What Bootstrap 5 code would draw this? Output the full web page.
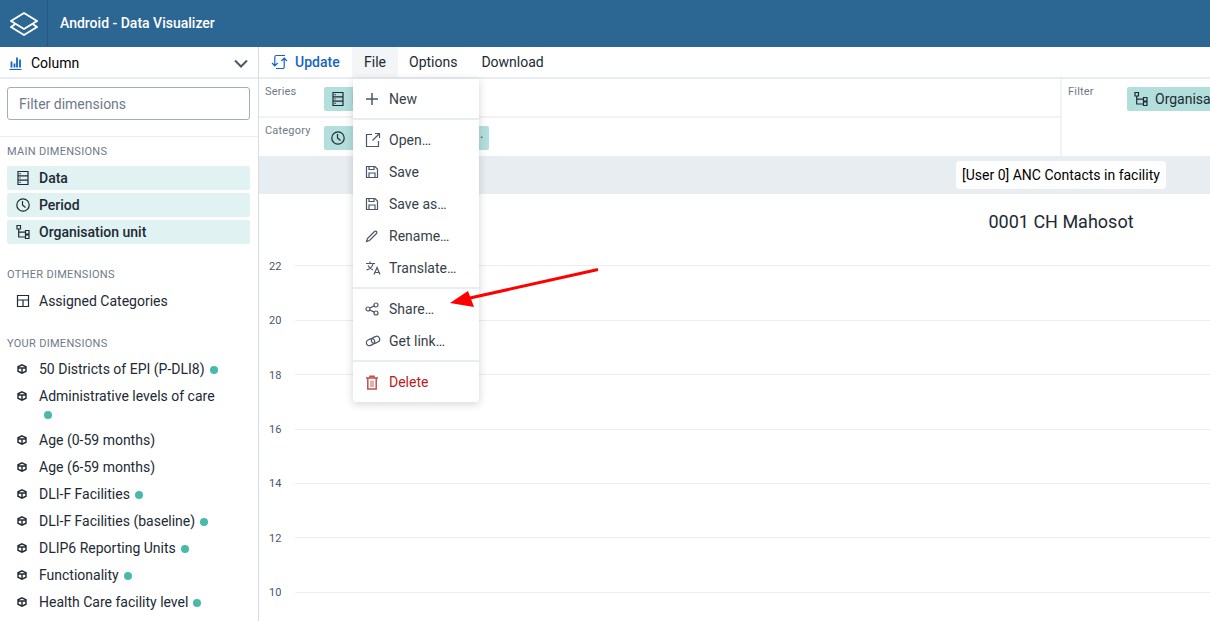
<!DOCTYPE html>
<html lang="en">
  <head>
    <meta charset="UTF-8" />
    <meta name="viewport" content="width=device-width, initial-scale=1.0" />
    <title>Android - Data Visualizer</title>
    <link href="https://cdn.jsdelivr.net/npm/bootstrap@5.3.2/dist/css/bootstrap.min.css" rel="stylesheet" />
    <style>
      html, body { height: 100%; overflow: hidden; }
      body { font-family: Roboto, "Liberation Sans", sans-serif; font-size: 14px; color: #212934; background: #fff; }
      svg.ico { fill: none; stroke: currentColor; stroke-width: 1.2; flex: none; display: block; }
      svg.ico.thick { stroke-width: 2; }
      svg.ico.mid { stroke-width: 1.5; }

      .app-head { height: 47px; background: #2c6693; color: #fff; }
      .app-logo { width: 48px; height: 47px; border-right: 1px solid #27597f; }
      .app-name { font-weight: 500; padding-left: 12px; }

      .app-body { height: 574px; }
      .side { width: 259px; flex: none; border-right: 1px solid #d5dde5; overflow: hidden; }
      .type-pick { height: 32px; padding: 2px 10px 0 9px; border-bottom: 2px solid #e8edf2; font-size: 14px; color: #000; }
      .type-pick svg.bars { color: #1565c0; margin-right: 9px; }
      .type-pick svg.chev { color: #4a5768; }
      .filter-wrap { height: 58px; padding: 8px 8px 0 7px; border-bottom: 1px solid #e8edf2; }
      .filter-box { height: 33px; width: 243px; border: 1px solid #a0adba; border-radius: 3px; font-size: 14px; padding: 0 11px; color: #212934; box-shadow: none; }
      .filter-box::placeholder { color: #6e7a8a; }
      .sec-title { font-size: 11px; line-height: 14px; color: #6e7a8a; padding-left: 7px; letter-spacing: .3px; text-transform: uppercase; margin-bottom: 7px; }
      .sec-main { margin-top: 8px; }
      .sec-other { margin-top: 24px; }
      .sec-your { margin-top: 24px; margin-bottom: 6px; }
      .dim-row { width: 243px; margin-left: 7px; min-height: 24px; padding-left: 9px; display: flex; line-height: 24px; border-radius: 2px; }
      .dim-row .ic-cell { width: 23px; flex: none; height: 24px; display: flex; align-items: center; }
      .dim-on { background: #e0f2f1; font-weight: 500; margin-bottom: 3px; }
      .dim-sm { margin-bottom: 3px; line-height: 24px; padding-right: 30px; }
      .dim-sm .ic-cell { padding-left: 1px; }
      .live-dot { display: inline-block; width: 8px; height: 8px; border-radius: 50%; background: #48b9ab; margin-left: 5px; vertical-align: 0; }
      .wrap-line { height: 17px; line-height: 12px; }

      .work { flex: 1 1 auto; min-width: 0; overflow: hidden; }
      .work-in { width: 1604px; }
      .tool-bar { height: 32px; border-bottom: 2px solid #e8edf2; }
      .tool-btn { height: 30px; padding: 0 13px 0 11px; display: flex; align-items: center; color: #212934; }
      .tool-update { width: 93px; padding: 0 0 0 12px; color: #1565c0; font-weight: 500; }
      .tool-update svg { margin-right: 7px; }
      .tool-file { width: 46px; padding: 0; background: #f3f5f7; }

      .lay-wrap { height: 77px; background: #fff; }
      .lay-left { width: 803px; border-right: 2px solid #f0f2f5; }
      .lay-row { height: 39px; display: flex; padding: 0 0 0 6px; }
      .lay-row:first-child { border-bottom: 2px solid #f0f2f5; }
      .lay-lbl { width: 59px; flex: none; font-size: 11px; color: #6e7a8a; padding-top: 6px; line-height: 14px; letter-spacing: .2px; }
      .chip { height: 24px; margin-top: 8px; background: #b2dfdb; border-radius: 2px; display: flex; align-items: center; padding: 0 6px 0 7px; }
      .chip svg { margin-right: 7px; }
      .chip-cat { width: 165px; justify-content: space-between; }
      .chip-more { font-size: 8px; color: #4a5768; }
      .lay-right { padding: 0 0 0 6px; display: flex; }

      .title-bar { height: 38px; background: #e8edf2; display: flex; justify-content: center; align-items: center; }
      .title-chip { background: #fff; border-radius: 4px; height: 28px; padding: 0 6px; line-height: 28px; color: #000; }
      .chart-title { height: 56px; padding-top: 17px; text-align: center; font-size: 18px; line-height: 22px; color: #212934; }
      .chart-rows { padding-top: 15.4px; }
      .grid-row { height: 54.4px; display: flex; align-items: flex-start; }
      .grid-row span { width: 36px; flex: none; font-size: 11px; color: #4a5768; padding-left: 10px; line-height: 14px; margin-top: -5.6px; }
      .grid-row i { flex: 1 1 auto; border-top: 1px solid #ebedf0; display: block; }

      .file-menu { position: absolute; left: 353px; top: 79px; width: 126px; height: 323px; background: #fff; border-radius: 2px; padding-top: 4px;
        box-shadow: 0 2px 8px rgba(33,41,52,.2); z-index: 5; }
      .menu-row { height: 32px; display: flex; align-items: center; padding-left: 12px; color: #373f4a; }
      .menu-row .mi { width: 24px; flex: none; color: #4a5768; }
      .menu-line { height: 2px; background: #e8edf2; margin: 3px 0 4px; }
      .menu-del { color: #b71c1c; }
      .menu-del .mi { color: #c0504d; }
      .red-arrow { position: absolute; left: 440px; top: 260px; z-index: 6; }
      .icon-defs { position: absolute; }
    </style>
  </head>
  <body>
    <header class="app-head d-flex align-items-center">
      <div class="app-logo d-flex align-items-center justify-content-center">
        <svg width="28" height="24" viewBox="0 0 28 24" fill="none" stroke="#fff" stroke-width="2" stroke-linejoin="round" class="d-block">
          <path d="M14 1 L27 9 L14 17 L1 9 Z" />
          <path d="M5 12.200 L1 15 L14 23 L27 15 L23 12.200" />
        </svg>
      </div>
      <div class="app-name">Android - Data Visualizer</div>
    </header>

    <div class="app-body d-flex">
      <aside class="side">
        <div class="type-pick d-flex align-items-center">
          <svg class="ico bars" width="13" height="13" viewBox="0 0 13 13"><path d="M.5 12.500h12" /><path d="M2.500 10.500v-6M5.500 10.500v-4M8 10.500V.5M11 10.500v-8" stroke-width="1.800" /></svg>
          <span class="flex-grow-1">Column</span>
          <svg class="ico thick chev" width="14" height="9" viewBox="0 0 14 9"><path d="M1 1.500l6 6 6-6" /></svg>
        </div>
        <div class="filter-wrap">
          <input class="form-control filter-box" placeholder="Filter dimensions" />
        </div>

        <div class="sec-title sec-main">Main dimensions</div>
        <div class="dim-row dim-on"><div class="ic-cell"><svg class="ico" width="14" height="14" viewBox="0 0 14 14"><use href="#i-data" /></svg></div>Data</div>
        <div class="dim-row dim-on"><div class="ic-cell"><svg class="ico" width="14" height="14" viewBox="0 0 14 14"><use href="#i-clock" /></svg></div>Period</div>
        <div class="dim-row dim-on"><div class="ic-cell"><svg class="ico" width="14" height="14" viewBox="0 0 14 14"><use href="#i-org" /></svg></div>Organisation unit</div>

        <div class="sec-title sec-other">Other dimensions</div>
        <div class="dim-row"><div class="ic-cell"><svg class="ico" width="14" height="14" viewBox="0 0 14 14"><path d="M1.500 1.500h11v11h-11zM1.500 6h11M7 6v6.500" /></svg></div>Assigned Categories</div>

        <div class="sec-title sec-your">Your dimensions</div>
        <div id="dim-list"></div>
      </aside>

      <main class="work">
        <div class="work-in">
          <div class="tool-bar d-flex">
            <div class="tool-btn tool-update">
              <svg class="ico" width="17" height="16" viewBox="0 0 17 16"><path d="M1 9l2.800 2.800L6.600 9M3.800 11.800V3a1.500 1.500 0 0 1 1.500-1.500H14M16 7l-2.800-2.800L10.400 7M13.200 4.200V13a1.500 1.500 0 0 1-1.500 1.500H5" /></svg>
              Update
            </div>
            <div class="tool-btn tool-file justify-content-center">File</div>
            <div class="tool-btn">Options</div>
            <div class="tool-btn">Download</div>
          </div>

          <div class="lay-wrap d-flex">
            <div class="lay-left">
              <div class="lay-row">
                <div class="lay-lbl">Series</div>
                <div class="chip"><svg class="ico" width="14" height="14" viewBox="0 0 14 14"><use href="#i-data" /></svg>Data</div>
              </div>
              <div class="lay-row">
                <div class="lay-lbl">Category</div>
                <div class="chip chip-cat"><svg class="ico" width="14" height="14" viewBox="0 0 14 14"><use href="#i-clock" /></svg><span class="chip-more">•</span></div>
              </div>
            </div>
            <div class="lay-right">
              <div class="lay-lbl">Filter</div>
              <div class="chip"><svg class="ico" width="14" height="14" viewBox="0 0 14 14"><use href="#i-org" /></svg>Organisation unit</div>
            </div>
          </div>

          <div class="title-bar"><div class="title-chip">[User 0] ANC Contacts in facility</div></div>
          <div class="chart-title">0001 CH Mahosot</div>
          <div class="chart-rows" id="chart-rows"></div>
        </div>
      </main>
    </div>

    <div class="file-menu">
      <div class="menu-row"><div class="mi"><svg class="ico mid" width="14" height="14" viewBox="0 0 14 14"><path d="M7 1v12M1 7h12" /></svg></div>New</div>
      <div class="menu-line"></div>
      <div class="menu-row"><div class="mi"><svg class="ico" width="16" height="16" viewBox="0 0 16 16"><path d="M7 2.500H1.500v12h12V9M7.500 8.500l7-7M10 1.500h4.500V6" /></svg></div>Open…</div>
      <div class="menu-row"><div class="mi"><svg class="ico" width="14" height="14" viewBox="0 0 14 14"><use href="#i-save" /></svg></div>Save</div>
      <div class="menu-row"><div class="mi"><svg class="ico" width="14" height="14" viewBox="0 0 14 14"><use href="#i-save" /></svg></div>Save as…</div>
      <div class="menu-row"><div class="mi"><svg class="ico" width="14" height="14" viewBox="0 0 14 14"><path d="M2.500 9.500L9.500 2.500a1.400 1.400 0 0 1 2 2L4.500 11.500l-3 1z" /></svg></div>Rename…</div>
      <div class="menu-row"><div class="mi"><svg class="ico" width="16" height="16" viewBox="0 0 16 16"><path d="M1 3.500h9M5 1.500v2M8 3.500c-.5 3-3 5.500-6.500 6.500M3 5.500c1 2 3 3.500 5 4.500M9 14.500l3-7 3 7M10 12.500h4" /></svg></div>Translate…</div>
      <div class="menu-line"></div>
      <div class="menu-row"><div class="mi"><svg class="ico" width="14" height="14" viewBox="0 0 14 14"><circle cx="3" cy="7" r="2" /><circle cx="11" cy="3" r="2" /><circle cx="11" cy="11" r="2" /><path d="M4.800 6l4.400-2.100M4.800 8l4.400 2.100" /></svg></div>Share…</div>
      <div class="menu-row"><div class="mi"><svg class="ico" width="16" height="14" viewBox="0 0 16 14"><g transform="rotate(-25 8 7)"><rect x="1" y="4" width="8.500" height="6" rx="3" /><rect x="6.500" y="4" width="8.500" height="6" rx="3" /></g></svg></div>Get link…</div>
      <div class="menu-line"></div>
      <div class="menu-row menu-del"><div class="mi"><svg class="ico mid" width="14" height="15" viewBox="0 0 14 15"><path d="M1 3h12M5 3V1.200h4V3M2.800 3v11h8.400V3" /><rect x="5" y="5.500" width="4" height="6.500" fill="currentColor" fill-opacity=".45" stroke="none" /></svg></div>Delete</div>
    </div>

    <svg class="red-arrow" width="170" height="60" viewBox="0 0 170 60">
      <path d="M158 9.500L30 38" stroke="#f00" stroke-width="3" fill="none" />
      <path d="M10 43L28 31L34 47Z" fill="#f00" />
    </svg>

    <svg width="0" height="0" class="icon-defs">
      <symbol id="i-data" viewBox="0 0 14 14"><path d="M2 .5h10v13H2zM2 4.800h10M2 9.200h10" /><path d="M3.500 2.700h1.200M3.500 7h1.200M3.500 11.300h1.200" /></symbol>
      <symbol id="i-clock" viewBox="0 0 14 14"><circle cx="7" cy="7" r="6.200" /><path d="M6.500 3v4l3 2.500" /></symbol>
      <symbol id="i-org" viewBox="0 0 14 14"><path d="M1 .5h3.500V4H1zM9.500 5.500H13V9H9.500zM9.500 10H13v3.500H9.500z" /><path d="M2.700 4v8h6.800M2.700 7.200h6.800" /></symbol>
      <symbol id="i-save" viewBox="0 0 14 14"><path d="M1.500 1.500h8.500l2.500 2.500v8.500h-11zM4 1.500v3h5v-3M4 12.500V8h6v4.500" /></symbol>
      <symbol id="i-box" viewBox="0 0 10 10"><path d="M5 .8L9 2.800v4.400L5 9.200 1 7.200V2.800zM1 4h8M5 4v5.200" stroke-width="1.400" /></symbol>
    </svg>

    <script>
      const dims = [
        ["50 Districts of EPI (P-DLI8)", true],
        ["Administrative levels of care", "wrap"],
        ["Age (0-59 months)", false],
        ["Age (6-59 months)", false],
        ["DLI-F Facilities", true],
        ["DLI-F Facilities (baseline)", true],
        ["DLIP6 Reporting Units", true],
        ["Functionality", true],
        ["Health Care facility level", true],
      ];
      document.getElementById("dim-list").innerHTML = dims.map(([name, dot]) => `
        <div class="dim-row dim-sm">
          <div class="ic-cell"><svg class="ico" width="10" height="10" viewBox="0 0 10 10"><use href="#i-box" /></svg></div>
          <div>${name}${dot === "wrap" ? '<div class="wrap-line"><span class="live-dot"></span></div>' : dot ? '<span class="live-dot"></span>' : ""}</div>
        </div>`).join("");

      document.getElementById("chart-rows").innerHTML = [22, 20, 18, 16, 14, 12, 10]
        .map((n) => `<div class="grid-row"><span>${n}</span><i></i></div>`).join("");
    </script>
    <script src="https://cdn.jsdelivr.net/npm/bootstrap@5.3.2/dist/js/bootstrap.bundle.min.js"></script>
  </body>
</html>
